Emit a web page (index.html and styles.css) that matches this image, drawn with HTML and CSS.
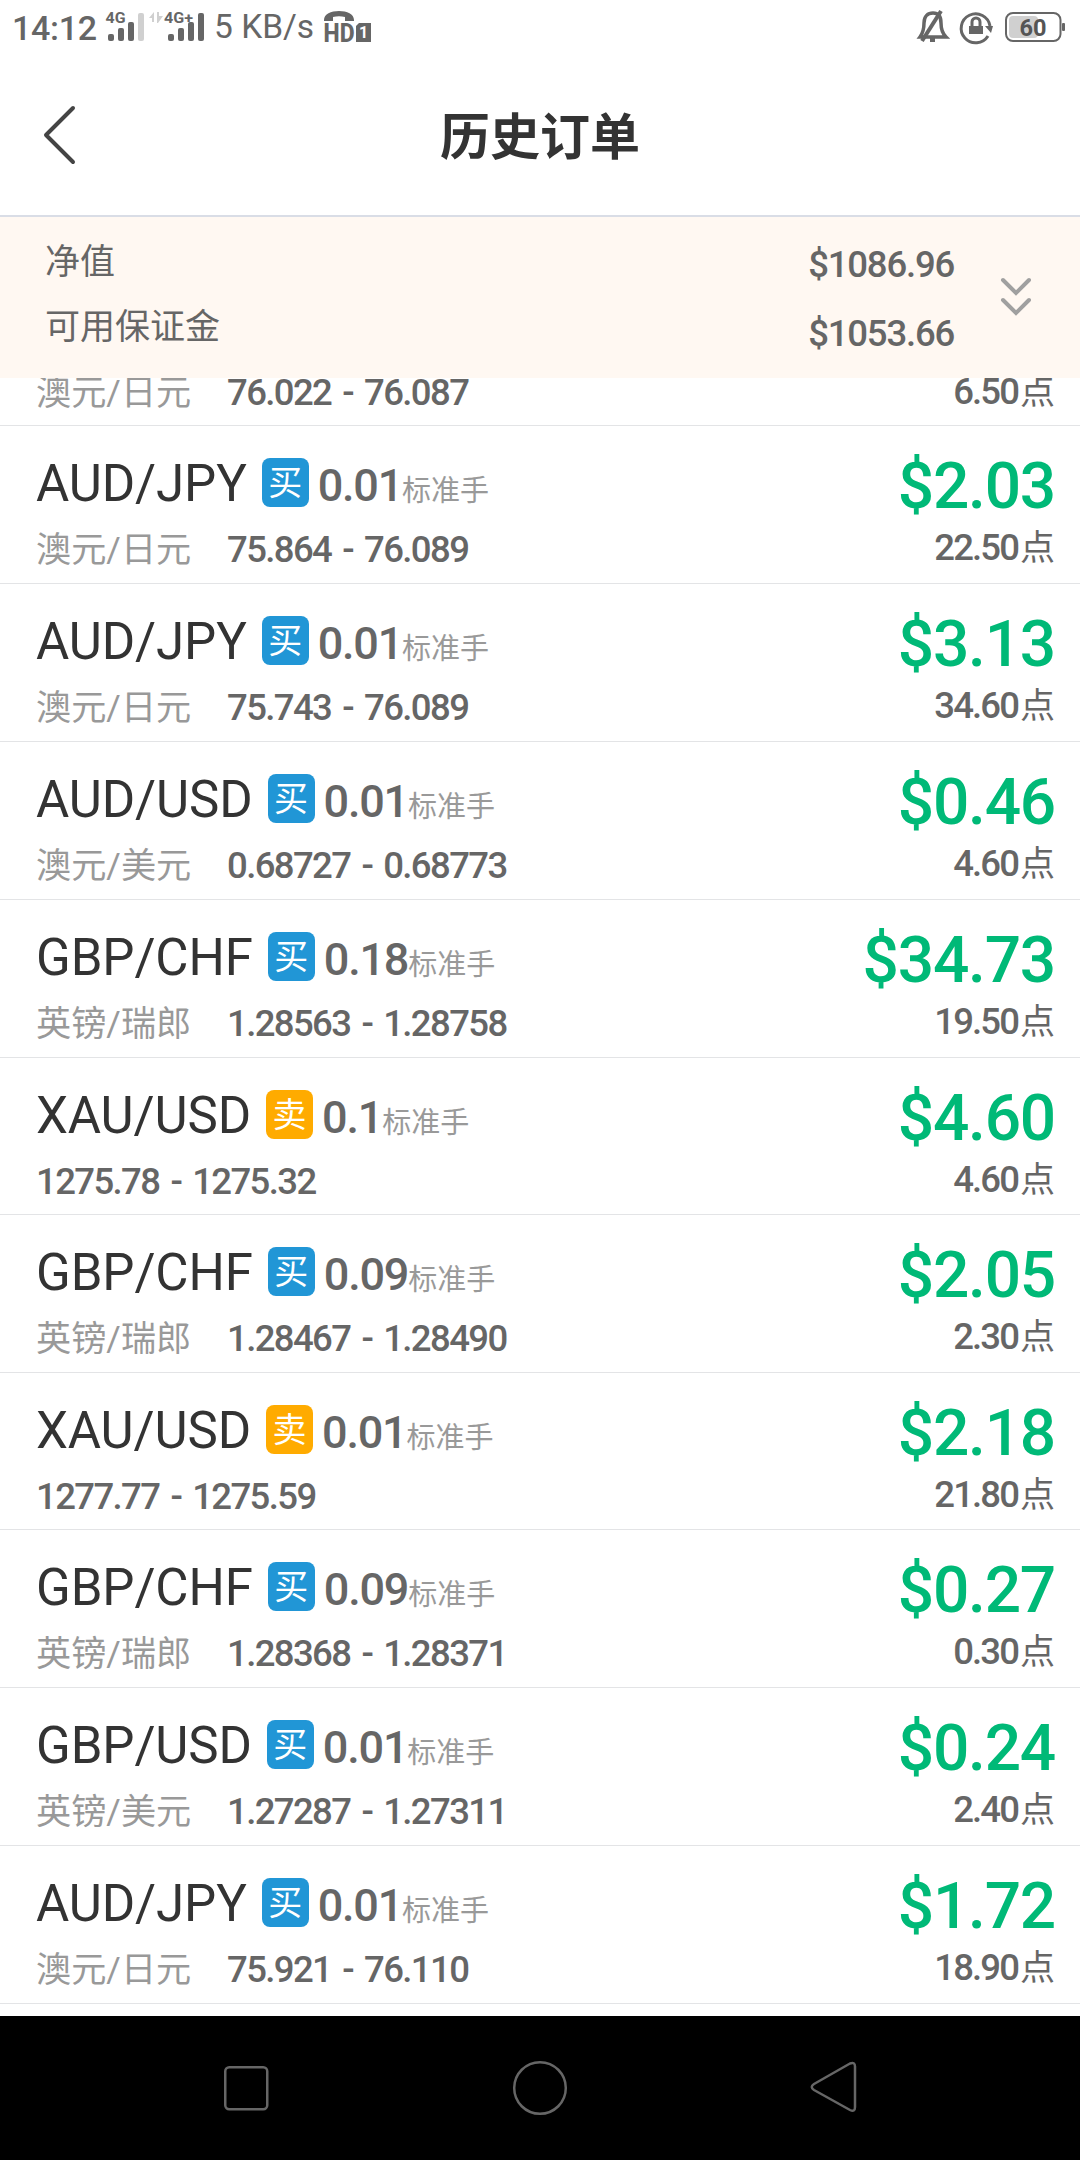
FILE: index.html
```
<!DOCTYPE html>
<html lang="zh-CN">
<head>
<meta charset="utf-8">
<title>历史订单</title>
<link rel="stylesheet" href="styles.css">
</head>
<body>
<div class="screen">
  <div class="status">
    <span class="clock">14:12</span>
    <svg class="signals" width="100" height="36" viewBox="104 8 100 36">
      <g fill="#666">
        <text x="105.5" y="23" font-size="14" font-weight="700" textLength="20" lengthAdjust="spacingAndGlyphs">4G</text>
        <rect x="108" y="34" width="6" height="7" rx="2"/><rect x="118" y="28" width="6" height="13" rx="2"/><rect x="128" y="22" width="6" height="19" rx="2"/>
        <rect x="138" y="13" width="6" height="28" rx="2" fill="#d0d0d0"/>
        <path d="M149 18l5-6v10h-2v-4zM157 12h2v4h4l-5 7h-1z" fill="#d0d0d0"/>
        <text x="164" y="23" font-size="14" font-weight="700" textLength="29" lengthAdjust="spacingAndGlyphs">4G+</text>
        <rect x="168" y="34" width="6" height="7" rx="2"/><rect x="178" y="28" width="6" height="13" rx="2"/><rect x="188" y="22" width="6" height="19" rx="2"/><rect x="198" y="13" width="6" height="28" rx="2"/>
      </g>
    </svg>
    <span class="speed">5 KB/s</span>
    <svg class="hd" width="48" height="34" viewBox="324 10 48 34">
      <path d="M324 20c0-6 7-9 15-9s15 3 15 9v1h-9v-4c-4-1-8-1-12 0v4h-9z" fill="#666"/>
      <text x="323.5" y="42" font-size="26" font-weight="800" fill="#666" textLength="31" lengthAdjust="spacingAndGlyphs">HD</text>
      <path d="M359 23h12v19h-15V26z" fill="#666"/>
      <text x="359" y="38" font-size="16" font-weight="700" fill="#fff">1</text>
    </svg>
    <span class="grow"></span>
    <svg class="bell" width="32" height="34" viewBox="917 9 32 34">
      <g fill="none" stroke="#666" stroke-width="3.5">
        <path d="M920 37h26c-4-4-5-8-5-14 0-7-3-10-8-10s-9 3-9 10c0 6-1 10-4 14z"/>
        <path d="M941 11l-19 30" stroke-width="4"/><path d="M930 40h5" stroke-width="4"/>
      </g>
    </svg>
    <svg class="lock" width="34" height="34" viewBox="959 10 34 34">
      <path d="M988 36a14.5 14.5 0 1 1 2-10" fill="none" stroke="#666" stroke-width="3"/>
      <path d="M985 26h8l-2 7z" fill="#666"/>
      <rect x="969" y="26" width="14" height="8" fill="#666"/>
      <path d="M972 27v-5a4 4 0 0 1 8 0v5" fill="none" stroke="#666" stroke-width="3"/>
    </svg>
    <svg class="battery" width="62" height="32" viewBox="1004 11 62 32">
      <rect x="1009" y="16" width="29" height="22" rx="4" fill="#d0d0d0"/>
      <rect x="1006" y="13" width="54.500" height="28" rx="7" fill="none" stroke="#666" stroke-width="2"/>
      <rect x="1062" y="23" width="3" height="8" rx="1" fill="#666"/>
      <text x="1019.500" y="36" font-size="24" font-weight="700" fill="#555" textLength="27" lengthAdjust="spacingAndGlyphs">60</text>
    </svg>
  </div>

  <header class="header">
    <svg class="back" width="36" height="62" viewBox="0 0 36 62"><path d="M32 4L5 31l27 27" fill="none" stroke="#444" stroke-width="4" stroke-linecap="round" stroke-linejoin="round"/></svg>
    <h1 class="title">历史订单</h1>
  </header>

  <section class="summary">
    <div class="labels"><span>净值</span><span>可用保证金</span></div>
    <div class="values"><span>$1086.96</span><span>$1053.66</span></div>
    <svg class="expand" width="34" height="40" viewBox="0 0 34 40"><path d="M4 4l13 13L30 4M4 24l13 13 13-13" fill="none" stroke="#a0a0a0" stroke-width="4" stroke-linecap="round"/></svg>
  </section>

  <main class="orders">
    <div class="order cut">
      <div class="left"><div class="detail"><span class="name">澳元/日元</span><span class="price">76.022 - 76.087</span></div></div>
      <div class="right"><div class="points">6.50<i>点</i></div></div>
    </div>
    <div class="order">
      <div class="left"><div class="head"><span class="pair">AUD/JPY</span><span class="tag buy">买</span><span class="lot">0.01</span><span class="unit">标准手</span></div>
      <div class="detail"><span class="name">澳元/日元</span><span class="price">75.864 - 76.089</span></div></div>
      <div class="right"><div class="profit">$2.03</div><div class="points">22.50<i>点</i></div></div>
    </div>
    <div class="order">
      <div class="left"><div class="head"><span class="pair">AUD/JPY</span><span class="tag buy">买</span><span class="lot">0.01</span><span class="unit">标准手</span></div>
      <div class="detail"><span class="name">澳元/日元</span><span class="price">75.743 - 76.089</span></div></div>
      <div class="right"><div class="profit">$3.13</div><div class="points">34.60<i>点</i></div></div>
    </div>
    <div class="order">
      <div class="left"><div class="head"><span class="pair">AUD/USD</span><span class="tag buy">买</span><span class="lot">0.01</span><span class="unit">标准手</span></div>
      <div class="detail"><span class="name">澳元/美元</span><span class="price">0.68727 - 0.68773</span></div></div>
      <div class="right"><div class="profit">$0.46</div><div class="points">4.60<i>点</i></div></div>
    </div>
    <div class="order">
      <div class="left"><div class="head"><span class="pair">GBP/CHF</span><span class="tag buy">买</span><span class="lot">0.18</span><span class="unit">标准手</span></div>
      <div class="detail"><span class="name">英镑/瑞郎</span><span class="price">1.28563 - 1.28758</span></div></div>
      <div class="right"><div class="profit">$34.73</div><div class="points">19.50<i>点</i></div></div>
    </div>
    <div class="order metal">
      <div class="left"><div class="head"><span class="pair">XAU/USD</span><span class="tag sell">卖</span><span class="lot">0.1</span><span class="unit">标准手</span></div>
      <div class="detail"><span class="price">1275.78 - 1275.32</span></div></div>
      <div class="right"><div class="profit">$4.60</div><div class="points">4.60<i>点</i></div></div>
    </div>
    <div class="order">
      <div class="left"><div class="head"><span class="pair">GBP/CHF</span><span class="tag buy">买</span><span class="lot">0.09</span><span class="unit">标准手</span></div>
      <div class="detail"><span class="name">英镑/瑞郎</span><span class="price">1.28467 - 1.28490</span></div></div>
      <div class="right"><div class="profit">$2.05</div><div class="points">2.30<i>点</i></div></div>
    </div>
    <div class="order metal">
      <div class="left"><div class="head"><span class="pair">XAU/USD</span><span class="tag sell">卖</span><span class="lot">0.01</span><span class="unit">标准手</span></div>
      <div class="detail"><span class="price">1277.77 - 1275.59</span></div></div>
      <div class="right"><div class="profit">$2.18</div><div class="points">21.80<i>点</i></div></div>
    </div>
    <div class="order">
      <div class="left"><div class="head"><span class="pair">GBP/CHF</span><span class="tag buy">买</span><span class="lot">0.09</span><span class="unit">标准手</span></div>
      <div class="detail"><span class="name">英镑/瑞郎</span><span class="price">1.28368 - 1.28371</span></div></div>
      <div class="right"><div class="profit">$0.27</div><div class="points">0.30<i>点</i></div></div>
    </div>
    <div class="order">
      <div class="left"><div class="head"><span class="pair">GBP/USD</span><span class="tag buy">买</span><span class="lot">0.01</span><span class="unit">标准手</span></div>
      <div class="detail"><span class="name">英镑/美元</span><span class="price">1.27287 - 1.27311</span></div></div>
      <div class="right"><div class="profit">$0.24</div><div class="points">2.40<i>点</i></div></div>
    </div>
    <div class="order">
      <div class="left"><div class="head"><span class="pair">AUD/JPY</span><span class="tag buy">买</span><span class="lot">0.01</span><span class="unit">标准手</span></div>
      <div class="detail"><span class="name">澳元/日元</span><span class="price">75.921 - 76.110</span></div></div>
      <div class="right"><div class="profit">$1.72</div><div class="points">18.90<i>点</i></div></div>
    </div>
  </main>

  <nav class="navbar">
    <svg width="60" height="60" viewBox="0 0 60 60"><rect x="9.250" y="9.250" width="42" height="42" rx="4"/></svg>
    <svg width="60" height="60" viewBox="0 0 60 60"><circle cx="30" cy="30" r="25.800"/></svg>
    <svg width="60" height="60" viewBox="0 0 60 60"><path d="M10 26L46 5.500Q51 3.500 51 8.500V49Q51 54.500 46 52L10 32Q5.500 29 10 26z"/></svg>
  </nav>
</div>
</body>
</html>
```
FILE: styles.css
```
* { box-sizing: border-box; }
body { margin: 0; background: #fff; font-family: Roboto, "Noto Sans CJK SC", sans-serif; color: #666; }
svg { display: block; flex: none; overflow: visible; }
.screen { width: 1080px; height: 2160px; display: flex; flex-direction: column; overflow: hidden; }

.status { height: 54px; display: flex; align-items: flex-start; padding: 0 14px 0 12px; white-space: nowrap; }
.clock { width: 92px; font-size: 34px; line-height: 40px; padding-top: 8px; font-weight: 500; letter-spacing: -.3px; }
.signals { margin-top: 8px; }
.speed { width: 110px; margin-left: 10px; font-size: 33.500px; line-height: 40px; padding-top: 7px; }
.hd { margin-top: 10px; }
.grow { flex: 1; }
.bell { margin-top: 9px; }
.lock { margin: 10px 11px 0 10px; }
.battery { margin-top: 11px; }

.header { height: 163px; display: grid; grid-template-columns: 120px 1fr 120px; align-items: center; border-bottom: 2px solid #d9dde6; }
.back { margin-left: 41px; }
.title { margin: 0; padding-top: 7px; font-size: 50px; line-height: 60px; font-weight: 700; text-align: center; color: #333; }

.summary { height: 161px; display: flex; background: #fff8f2; font-size: 35px; padding: 0 47px 0 45px; }
.labels, .values { display: flex; flex-direction: column; }
.labels { flex: 1; line-height: 65px; padding-top: 13px; }
.values { font-size: 36.500px; line-height: 69px; font-weight: 500; padding-top: 13px; letter-spacing: -1.200px; text-align: right; }
.expand { margin: 59px 0 0 45px; }

.orders { flex: 1; overflow: hidden; white-space: nowrap; }
.order { height: 158px; display: flex; justify-content: space-between; padding: 27px 25px 0 36px; border-bottom: 1px solid #e3e4e6; }
.metal { height: 157px; }
.cut { height: 48px; align-items: flex-end; padding-top: 0; padding-bottom: 10px; }
.head { height: 60px; display: flex; align-items: baseline; line-height: 61px; margin-bottom: 15px; }
.pair { font-size: 51px; color: #333; letter-spacing: -.1px; }
.tag { align-self: center; width: 47px; height: 49px; margin: -2px 0 0 15px; border-radius: 8px; color: #fff; font-size: 34px; line-height: 51px; text-align: center; }
.buy { background: #2196d6; }
.sell { background: #ffab00; }
.lot { margin-left: 9px; font-size: 45px; font-weight: 500; letter-spacing: -1.200px; }
.unit { font-size: 29px; color: #999; }
.detail { display: flex; align-items: baseline; line-height: 44px; height: 44px; }
.name { width: 191px; font-size: 35.200px; color: #999; }
.price { font-size: 36.500px; font-weight: 500; letter-spacing: -1.600px; word-spacing: 3.500px; }
.right { text-align: right; }
.profit { font-size: 64px; line-height: 66px; height: 64px; margin: 1px 0 8px; font-weight: 500; color: #00b977; letter-spacing: -1.200px; }
.points { font-size: 36.500px; line-height: 44px; height: 44px; font-weight: 500; letter-spacing: -1.900px; }
.points i { font-style: normal; font-weight: 400; font-size: 35px; letter-spacing: 0; margin-left: 2px; }
.cut .right { padding-bottom: 1px; }

.navbar { height: 144px; background: #000; display: flex; justify-content: space-between; align-items: center; padding: 0 216px; }
.navbar svg { fill: none; stroke: #666; stroke-width: 2.500; stroke-linejoin: round; }
```
